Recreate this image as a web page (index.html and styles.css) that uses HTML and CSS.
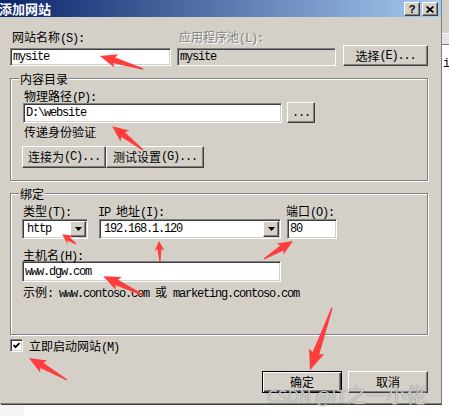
FILE: index.html
```html
<!DOCTYPE html>
<html lang="zh-CN">
<head>
<meta charset="utf-8">
<title>添加网站</title>
<link rel="stylesheet" href="styles.css">
</head>
<body>
<div class="page">
  <div class="screen">
    <div class="dialog">
      <div class="titlebar">
        <span class="title">添加网站</span>
        <div class="tbtns">
          <span class="tbtn help">?</span>
          <span class="tbtn close"><svg width="8" height="7" viewBox="0 0 8 7"><path d="M0.6 0.5 L7.4 6.5 M7.4 0.5 L0.6 6.5" stroke="#000" stroke-width="1.7" fill="none"/></svg></span>
        </div>
      </div>
      <div class="body">
        <div class="row1">
          <div class="col col-name">
            <div class="lbl">网站名称<span class="m">(S):</span></div>
            <div class="edit m name">mysite</div>
          </div>
          <div class="col col-pool">
            <div class="lbl dis">应用程序池<span class="m">(L):</span></div>
            <div class="edit m name disabled">mysite</div>
          </div>
          <button class="btn btn-select">选择<span class="m">(E)...</span></button>
        </div>

        <fieldset class="group g-content">
          <legend>内容目录</legend>
          <div class="lbl lbl-path">物理路径<span class="m">(P):</span></div>
          <div class="path-row">
            <div class="edit m path">D:\website</div>
            <button class="btn btn-browse"><span class="m">...</span></button>
          </div>
          <div class="pass">传递身份验证</div>
          <div class="btn-row">
            <button class="btn btn-connect">连接为<span class="m">(C)...</span></button>
            <button class="btn btn-test">测试设置<span class="m">(G)...</span></button>
          </div>
        </fieldset>

        <fieldset class="group g-bind">
          <legend>绑定</legend>
          <div class="bind-row">
            <div class="col col-type">
              <div class="lbl">类型<span class="m">(T):</span></div>
              <div class="combo"><span class="val m">http</span><span class="arr"><svg width="7" height="4" viewBox="0 0 7 4"><polygon points="0,0 7,0 3.5,4" fill="#000"/></svg></span></div>
            </div>
            <div class="col col-ip">
              <div class="lbl"><span class="m">IP </span>地址<span class="m">(I):</span></div>
              <div class="combo"><span class="val m">192.168.1.120</span><span class="arr"><svg width="7" height="4" viewBox="0 0 7 4"><polygon points="0,0 7,0 3.5,4" fill="#000"/></svg></span></div>
            </div>
            <div class="col col-port">
              <div class="lbl">端口<span class="m">(O):</span></div>
              <div class="edit m port">80</div>
            </div>
          </div>
          <div class="lbl host-lbl">主机名<span class="m">(H):</span></div>
          <div class="edit m host">www.dgw.com</div>
          <div class="example">示例<span class="m">: www.contoso.com </span>或<span class="m"> marketing.contoso.com</span></div>
        </fieldset>

        <div class="check-row">
          <span class="checkbox"><svg width="7" height="7" viewBox="0 0 7 7"><polyline points="0.5,3 2.5,5.2 6.5,1" fill="none" stroke="#000" stroke-width="1.8"/></svg></span>
          <span class="check-lbl">立即启动网站<span class="m">(M)</span></span>
        </div>

        <div class="action-row">
          <button class="btn btn-ok">确定</button>
          <button class="btn btn-cancel">取消</button>
        </div>
      </div>
    </div>
    <div class="side">
      <div class="side-top"></div>
      <div class="side-box"></div>
      <div class="side-text">i</div>
    </div>
  </div>
  <div class="bottom"><div class="bottom-block"></div></div>

  <div class="watermark"><span class="wm-latin">CSDN @IT</span>之一小佬</div>

  <svg class="arrows" width="449" height="416" viewBox="0 0 449 416">
    <g fill="#ff3d3d">
      <g transform="translate(143,69) rotate(196.8)"><polygon points="0,-0.7 30,-3 28,-7 45,0 28,7 30,3 0,0.7"/></g>
      <g transform="translate(143,150) rotate(217.7)"><polygon points="0,-0.7 25,-3 23,-7 39,0 23,7 25,3 0,0.7"/></g>
      <g transform="translate(76,244) rotate(215.5)"><polygon points="0,-0.6 9,-2 7,-5 17,0 7,5 9,2 0,0.6"/></g>
      <g transform="translate(160,262) rotate(267.3)"><polygon points="0,-0.6 13,-2 11,-5 21,0 11,5 13,2 0,0.6"/></g>
      <g transform="translate(143,295) rotate(205.4)"><polygon points="0,-0.7 29,-3 27,-7 44,0 27,7 29,3 0,0.7"/></g>
      <g transform="translate(264,259) rotate(-31.8)"><polygon points="0,-0.7 21,-3 19,-6.5 34,0 19,6.5 21,3 0,0.7"/></g>
      <g transform="translate(332,308) rotate(109.5)"><polygon points="0,-0.7 48,-3.5 46,-8 66,0 46,8 48,3.5 0,0.7"/></g>
      <g transform="translate(67,380) rotate(210.1)"><polygon points="0,-0.7 29,-3 27,-7 44,0 27,7 29,3 0,0.7"/></g>
    </g>
  </svg>
</div>
</body>
</html>
```

FILE: styles.css
```css
* { box-sizing: border-box; }
html, body { margin: 0; padding: 0; }
body {
  width: 449px; height: 416px; overflow: hidden; background: #fff;
  font-family: "Noto Sans CJK SC", "Noto Sans CJK JP", sans-serif;
  font-size: 12px; line-height: 14px; color: #000;
}
.page { position: relative; width: 449px; height: 416px; }
.screen { display: flex; height: 405px; }

.m { font-family: "Liberation Mono", monospace; letter-spacing: -1.2px; }
span.m { line-height: 8px; }

.dialog {
  width: 442px; height: 404px; flex: none; background: #d4d0c8;
  border-right: 1px solid #808080; border-bottom: 1px solid #808080;
  box-shadow: 1px 1px 0 #404040;
  display: flex; flex-direction: column;
}
.titlebar {
  height: 17px; margin-bottom: 1px; flex: none;
  background: linear-gradient(to right, #0a246a, #a6caf0);
  display: flex; justify-content: space-between; align-items: flex-start;
  padding-right: 3px;
}
.title { color: #fff; font-weight: bold; font-size: 13px; line-height: 17px; margin-left: -1px; }
.tbtns { display: flex; gap: 2px; margin-top: 2px; }
.tbtn {
  width: 16px; height: 14px; background: #d4d0c8;
  border: 1px solid; border-color: #fff #404040 #404040 #fff;
  box-shadow: inset -1px -1px #808080;
  display: flex; align-items: center; justify-content: center;
}
.help { font: bold 11px/12px "Liberation Sans", sans-serif; }

.body { padding-left: 10px; display: flex; flex-direction: column; align-items: flex-start; }

.lbl { line-height: 14px; padding-left: 2px; white-space: nowrap; }
.dis { color: #808080; text-shadow: 1px 1px #fff; }

.edit {
  background: #fff; border: 1px solid; border-color: #808080 #fff #fff #808080;
  box-shadow: inset 1px 1px #404040, inset -1px -1px #d4d0c8;
  padding: 1px 2px; white-space: nowrap; overflow: hidden;
  display: flex; align-items: center;
}
.edit.disabled { background: #d4d0c8; }

.btn {
  font: inherit; color: #000; background: #d4d0c8; padding: 0; margin: 0;
  border: 1px solid; border-color: #fff #404040 #404040 #fff;
  box-shadow: inset -1px -1px #808080;
  display: flex; align-items: center; justify-content: center; white-space: nowrap;
}

.row1 { display: flex; align-items: flex-end; margin-top: 12px; }
.col-name { width: 161px; }
.col-pool { width: 159px; margin-left: 6px; }
.name { height: 18px; margin-top: 4px; }
.btn-select { width: 85px; height: 21px; margin-left: 7px; }

fieldset.group {
  margin: 5px 0 0 0; width: 418px; min-width: 0;
  border: 1px solid #808080;
  box-shadow: inset 1px 1px #fff, 1px 1px #fff;
  padding: 3px 0 12px 12px;
}
legend { padding: 0 1px; margin-left: -4px; line-height: 15px; background: #d4d0c8; }

.lbl-path { line-height: 13px; padding-left: 1px; }
.path-row { display: flex; align-items: flex-end; }
.path { width: 259px; height: 20px; }
.btn-browse { width: 28px; height: 21px; margin-left: 5px; }
.pass { margin-top: 2px; line-height: 14px; padding-left: 1px; }
.btn-row { display: flex; margin-top: 7px; margin-left: -1px; }
.btn-connect { width: 84px; height: 22px; }
.btn-test { width: 98px; height: 22px; }

fieldset.g-bind { padding-bottom: 35px; }
.bind-row { display: flex; margin-left: -1px; }
.col-type { width: 66px; }
.col-ip { width: 182px; margin-left: 11px; }
.col-port { width: 50px; margin-left: 6px; }
.col-type .lbl { padding-left: 1px; }
.col-ip .lbl, .col-port .lbl { padding-left: 0; margin-left: -1px; }
.combo {
  margin-top: 1px; height: 20px; display: flex; align-items: center;
  background: #fff; border: 1px solid; border-color: #808080 #fff #fff #808080;
  box-shadow: inset 1px 1px #404040, inset -1px -1px #d4d0c8; padding: 1px;
}
.combo .val { flex: 1; padding-left: 3px; white-space: nowrap; line-height: 14px; }
.arr {
  width: 16px; height: 16px; background: #d4d0c8;
  border: 1px solid; border-color: #fff #404040 #404040 #fff;
  box-shadow: inset -1px -1px #808080;
  display: flex; align-items: center; justify-content: center;
}
.port { height: 20px; margin-top: 1px; }
.host-lbl { margin-top: 9px; line-height: 13px; padding-left: 0; }
.host { width: 259px; height: 21px; margin-left: -1px; }
.example { margin-top: 3px; line-height: 14px; white-space: nowrap; }

.check-row { display: flex; align-items: flex-start; margin-top: 4px; }
.checkbox {
  width: 13px; height: 13px; background: #fff;
  border: 1px solid; border-color: #808080 #fff #fff #808080;
  box-shadow: inset 1px 1px #404040, inset -1px -1px #d4d0c8;
  display: flex; align-items: center; justify-content: center;
}
.check-lbl { margin-left: 6px; line-height: 14px; }

.action-row { display: flex; justify-content: flex-end; gap: 6px; width: 418px; margin-top: 18px; }
.btn-ok {
  width: 80px; height: 22px; border: 1px solid #000;
  box-shadow: inset 1px 1px #fff, inset -1px -1px #404040, inset -2px -2px #808080;
}
.btn-cancel { width: 80px; height: 22px; }

.side { flex: 1; display: flex; flex-direction: column; background: #fff; }
.side-top { height: 33px; background: #d4d0c8; }
.side-box { height: 12px; background: #e4e4e4; border-top: 1px solid #fff; border-bottom: 1px solid #808080; }
.side-text { font-family: "Liberation Mono", monospace; font-size: 12px; padding-left: 1px; margin-top: 12px; }

.bottom { height: 11px; display: flex; }
.bottom-block { width: 24px; background: #f5f5f5; }

.watermark {
  position: absolute; left: 267px; top: 384px;
  font-size: 20px; line-height: 22px; white-space: nowrap;
  color: rgba(255,255,255,0.7);
  text-shadow: 0 0 1px rgba(70,70,70,0.9);
}
.wm-latin { font-size: 17px; }
.arrows { position: absolute; left: 0; top: 0; pointer-events: none; }
```
